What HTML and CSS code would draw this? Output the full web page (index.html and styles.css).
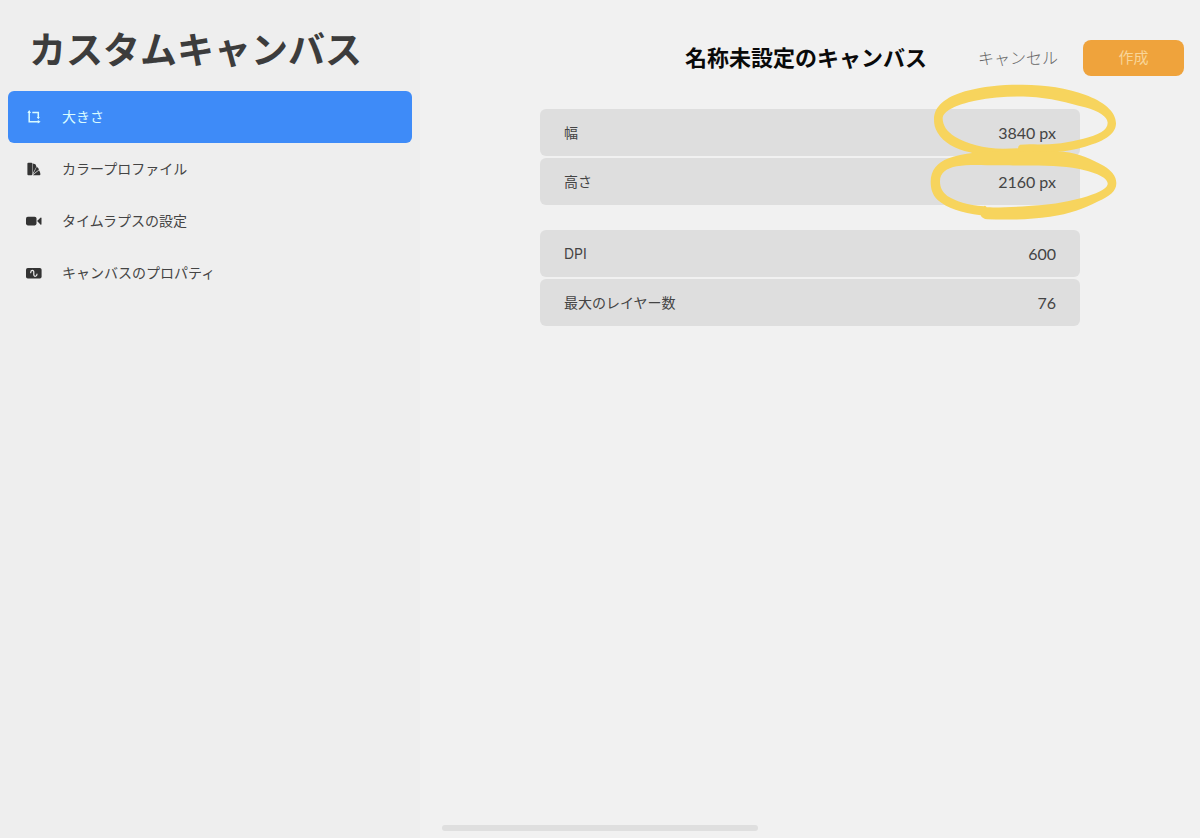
FILE: index.html
```html
<!DOCTYPE html>
<html lang="ja">
<head>
<meta charset="utf-8">
<meta name="viewport" content="width=device-width, initial-scale=1">
<title>カスタムキャンバス</title>
<link rel="stylesheet" href="styles.css">
</head>
<body>
<div class="app">
  <aside class="sidebar">
    <h1 class="sidebar-title">カスタムキャンバス</h1>
    <nav class="menu">
      <button type="button" class="menu-item is-active" aria-current="page">
        <svg class="icon" viewBox="0 0 16 16" aria-hidden="true"><g fill="none" stroke="currentColor" stroke-width="1.5"><path d="M3.2 2.5v10.2H13"/><path d="M6.3 3.4h6V9"/></g><path fill="currentColor" d="M3.2.9 5 3.9H1.4zM14.6 12.7l-2.8 1.8v-3.6zM12.3 10.2l-1.5-2.2h3z"/></svg>
        <span>大きさ</span>
      </button>
      <button type="button" class="menu-item">
        <svg class="icon" viewBox="0 0 16 16" aria-hidden="true"><g fill="currentColor"><rect x="1.4" y="1.8" width="5" height="12.4" rx="1"/><path d="M6.8 2.6 8.6 3q.8.1 1.1.8l.7 1.9-3.6 6.6zM10.8 5.8l1.7 1.6q.7.7.2 1.3l-5.7 4.6zM13 9.2l.8 1.5q.6 1.1.6 2.6 0 .9-.9.9H6.8z"/></g></svg>
        <span>カラープロファイル</span>
      </button>
      <button type="button" class="menu-item">
        <svg class="icon" viewBox="0 0 16 16" aria-hidden="true"><g fill="currentColor"><rect x="0" y="3.8" width="10.5" height="8.6" rx="1.8"/><path d="m11.1 8.1 3.3-3.4q1.1-.8 1.1.5V11q0 1.3-1.1.5z"/></g></svg>
        <span>タイムラプスの設定</span>
      </button>
      <button type="button" class="menu-item">
        <svg class="icon" viewBox="0 0 16 16" aria-hidden="true"><rect x="0" y="3" width="15.6" height="10.6" rx="1.8" fill="currentColor"/><path d="M4.7 7.7c0-3 3.1-3 3.1-.7v2.5c0 2.5 3.2 2.4 3.2-.5" fill="none" stroke="#eee" stroke-width="1.2" stroke-linecap="round"/></svg>
        <span>キャンバスのプロパティ</span>
      </button>
    </nav>
  </aside>

  <main class="content">
    <header class="toolbar">
      <h2 class="canvas-name">名称未設定のキャンバス</h2>
      <button type="button" class="cancel">キャンセル</button>
      <button type="submit" form="canvas-form" class="create">作成</button>
    </header>
    <form class="form" id="canvas-form">
      <div class="group">
        <div class="field"><label for="width">幅</label><input id="width" type="text" value="3840 px"></div>
        <div class="field"><label for="height">高さ</label><input id="height" type="text" value="2160 px"></div>
        <svg class="marker" viewBox="0 0 630 435" aria-hidden="true">
          <g fill="#f7d45d" fill-rule="evenodd">
            <path d="M42 118C42 80 75 52 135 34C190 18 250 14 300 14C370 13 440 24 495 44C550 64 588 94 588 130C588 160 558 183 495 200C465 209 435 214 405 217L350 232L190 230L150 217C105 207 70 187 53 158C44 145 42 132 42 118ZM68 115C69 92 110 74 165 62C220 51 270 48 325 50C390 53 445 68 495 82C538 94 562 110 563 128C563 151 535 164 490 176C440 190 385 195 330 193L300 194Q294 197 294 205L250 206C190 206 140 190 105 170C80 155 68 136 68 115Z"/>
            <path d="M32 305C32 272 50 248 86 235C130 219 195 212 285 213L430 215C480 220 515 237 552 258C575 272 589 289 589 310C589 334 568 350 535 364C490 387 450 402 390 410C330 419 260 420 202 418Q187 417 182 406C125 399 80 384 53 360C37 344 32 326 32 305ZM60 304C60 278 80 265 110 259C145 253 185 256 235 256C300 257 335 255 400 258C455 261 500 269 532 283C555 293 564 303 563 313C560 329 528 342 485 354C435 368 380 376 325 378C280 381 235 383 200 382Q196 374 191 379C145 376 105 363 82 348C66 335 60 322 60 304Z"/>
          </g>
        </svg>
      </div>
      <div class="group">
        <div class="field"><label for="dpi">DPI</label><input id="dpi" type="text" value="600"></div>
        <div class="field"><label for="layers">最大のレイヤー数</label><input id="layers" type="text" value="76" readonly></div>
      </div>
    </form>
  </main>
  <div class="home-indicator"></div>
</div>
</body>
</html>
```
FILE: styles.css
```css
* {
  box-sizing: border-box;
}

body {
  margin: 0;
  background: #f1f1f1;
  color: #444;
  font-family: Inter, "Noto Sans CJK JP", sans-serif;
  font-size: 14px;
  line-height: 20px;
}

button,
input {
  margin: 0;
  padding: 0;
  border: 0;
  background: none;
  color: inherit;
  font: inherit;
}

h1,
h2 {
  margin: 0;
}

.app {
  position: relative;
  display: grid;
  grid-template-columns: 35% 1fr;
  min-height: 100vh;
}

.sidebar {
  padding: 0 8px;
  background: #eee;
}

.sidebar-title {
  padding: 23px 21px 12px;
  color: #3c3c3c;
  font-size: 37px;
  font-weight: 700;
  line-height: 56px;
  white-space: nowrap;
}

.menu {
  display: flex;
  flex-direction: column;
}

.menu-item {
  display: flex;
  align-items: center;
  gap: 20px;
  height: 52px;
  padding: 0 18px;
  border-radius: 6px;
  text-align: left;
}

.menu-item.is-active {
  background: #3e8bf8;
  color: #d9fbff;
}

.icon {
  flex: none;
  width: 16px;
  height: 16px;
  color: #333;
}

.is-active .icon {
  color: #d9fbff;
}

.toolbar {
  display: flex;
  align-items: center;
  justify-content: flex-end;
  padding: 40px 16px 0;
}

.canvas-name {
  margin-right: 51px;
  color: #0a0a0a;
  font-size: 22px;
  font-weight: 700;
  line-height: 36px;
}

.cancel {
  margin-right: 25px;
  color: #666;
  font-size: 16px;
  font-weight: 300;
}

.create {
  width: 101px;
  height: 36px;
  border-radius: 8px;
  background: #efa33c;
  color: #f8d598;
  font-size: 15px;
}

.form {
  display: grid;
  gap: 25px;
  padding: 33px 120px;
}

.group {
  position: relative;
  display: grid;
  gap: 2px;
}

.field {
  display: flex;
  align-items: center;
  justify-content: space-between;
  height: 47px;
  padding: 0 24px;
  border-radius: 6px;
  background: #dedede;
}

.field input {
  width: 120px;
  font-family: Lato, sans-serif;
  font-size: 16px;
  text-align: right;
}

.marker {
  position: absolute;
  top: -29px;
  right: -50px;
  width: 210px;
  height: 145px;
  pointer-events: none;
}

.home-indicator {
  position: absolute;
  bottom: 7px;
  left: 50%;
  width: 316px;
  height: 6px;
  border-radius: 3px;
  background: #dfdfdf;
  transform: translateX(-50%);
}
```
